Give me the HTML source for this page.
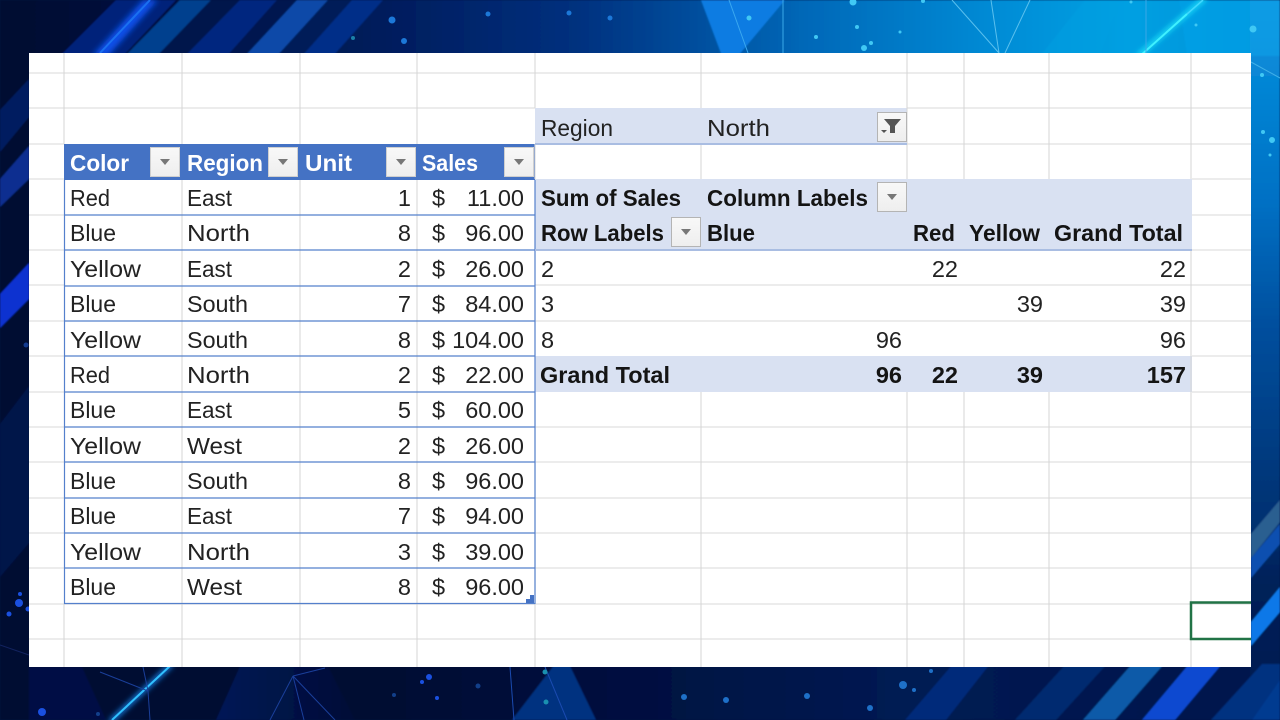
<!DOCTYPE html>
<html><head><meta charset="utf-8"><style>
html,body{margin:0;padding:0;background:#001040;width:1280px;height:720px;overflow:hidden}
svg{display:block}
text{font-family:"Liberation Sans",sans-serif;font-size:23.5px;fill:#222}
.b{font-weight:bold;fill:#141414}
.w{font-weight:bold;fill:#fff}
.g{stroke:#d8d8d8;stroke-width:1.1;fill:none}
.t{stroke:#5480cc;stroke-width:1.2;fill:none}
</style></head><body>
<svg width="1280" height="720" viewBox="0 0 1280 720" xmlns="http://www.w3.org/2000/svg">
<defs>
<linearGradient id="top" x1="0" x2="1" y1="0" y2="0"><stop offset="0" stop-color="#000a30"/><stop offset=".12" stop-color="#000f3e"/><stop offset=".3" stop-color="#001c5c"/><stop offset=".45" stop-color="#00307e"/><stop offset=".55" stop-color="#00509f"/><stop offset=".63" stop-color="#0068b8"/><stop offset=".78" stop-color="#008cd6"/><stop offset=".88" stop-color="#00a0e2"/><stop offset="1" stop-color="#008fd8"/></linearGradient>
<linearGradient id="bot" x1="0" x2="1" y1="0" y2="0"><stop offset="0" stop-color="#000a30"/><stop offset=".3" stop-color="#000a32"/><stop offset=".5" stop-color="#001040"/><stop offset=".7" stop-color="#001a52"/><stop offset="1" stop-color="#00174c"/></linearGradient>
<linearGradient id="rt" x1="0" x2="0" y1="0" y2="1"><stop offset="0" stop-color="#0a94e0"/><stop offset=".28" stop-color="#0070c4"/><stop offset=".45" stop-color="#004f9e"/><stop offset=".65" stop-color="#00387c"/><stop offset=".73" stop-color="#003070"/><stop offset=".8" stop-color="#00215a"/><stop offset="1" stop-color="#00174d"/></linearGradient>
<linearGradient id="btn" x1="0" x2="0" y1="0" y2="1"><stop offset="0" stop-color="#f8f8f8"/><stop offset="1" stop-color="#eeeeee"/></linearGradient>
<linearGradient id="tri2" x1="0" x2="1" y1="0" y2="0"><stop offset="0" stop-color="#001a5a" stop-opacity=".9"/><stop offset="1" stop-color="#001a5a" stop-opacity=".1"/></linearGradient>
<filter id="soft" x="-5%" y="-5%" width="110%" height="110%"><feGaussianBlur stdDeviation=".8"/></filter>
<filter id="glow" x="-50%" y="-50%" width="200%" height="200%"><feGaussianBlur stdDeviation="3"/></filter>
</defs>

<g filter="url(#soft)">
<rect width="1280" height="720" fill="#000a32"/>
<rect width="1280" height="56" fill="url(#top)"/>
<rect y="664" width="1280" height="56" fill="url(#bot)"/>
<rect x="1250" y="0" width="30" height="720" fill="url(#rt)"/>

<!-- top-left stripes -->
<polygon points="60,56 116,0 176,0 123,56" fill="#00217a"/>
<polygon points="125,56 180,0 211,0 157,56" fill="#00408e"/>
<polygon points="157,56 211,0 240,0 185,56" fill="#00144c"/>
<polygon points="185,56 240,0 277,0 227,56" fill="#00287f"/>
<polygon points="227,56 277,0 297,0 245,56" fill="#00164f"/>
<polygon points="245,56 297,0 328,0 277,56" fill="#0a48a8"/>
<polygon points="277,56 328,0 352,0 302,56" fill="#001a58"/>
<polygon points="302,56 352,0 383,0 333,56" fill="#002e88"/>

<!-- left strip -->
<polygon points="0,110 29,79 29,117 0,152" fill="#001f60"/>
<polygon points="0,179 29,146 29,179 0,207" fill="#0a2f90"/>
<polygon points="0,294 29,263 29,299 0,328" fill="#0a30d0"/>
<polygon points="0,424 29,386 29,543 0,577" fill="#00134a"/>

<!-- top-right shapes -->
<polygon points="701,0 785,0 738,56 722,56" fill="#0a7ce2"/>
<polygon points="1179,0 1280,0 1280,56 1187,56" fill="#0aa2e8" opacity=".6"/>
<polygon points="1040,56 1085,0 1120,0 1100,56" fill="#08a0e2" opacity=".5"/>

<!-- right strip stripes -->
<polygon points="1251,534 1280,500 1280,522 1251,558" fill="#2a5f90"/>
<polygon points="1251,558 1280,524 1280,544 1251,578" fill="#0a50b0"/>
<polygon points="1251,622 1280,587 1280,612 1251,646" fill="#0a78e8"/>
<polygon points="1251,700 1280,665 1280,720 1251,720" fill="#003a90"/>

<!-- bottom shapes -->
<polygon points="82,667 106,720 29,720 29,667" fill="#00144e" opacity=".7"/>
<polygon points="241,664 327,664 355,720 216,720" fill="url(#tri2)"/>
<polygon points="555,664 569,664 596,720 512,720" fill="#003080"/>
<polygon points="905,720 953,664 990,664 946,720" fill="#00297a"/>
<polygon points="1015,720 1066,664 1107,664 1056,720" fill="#002a70"/>
<polygon points="1083,720 1132,664 1164,664 1115,720" fill="#0a5aa8"/>
<polygon points="1142,720 1189,664 1222,664 1175,720" fill="#0a48d0"/>
<polygon points="1211,720 1262,664 1280,664 1280,680 1252,720" fill="#003080"/>
</g>

<!-- glows -->
<polygon points="92,56 143,0 158,0 108,56" fill="#0a50e8" filter="url(#glow)"/>
<line x1="100" y1="53" x2="150" y2="0" stroke="#1a70f0" stroke-width="2"/>
<line x1="1138" y1="56" x2="1205" y2="-2" stroke="#20f0ff" stroke-width="3.5" filter="url(#glow)"/>
<line x1="1140" y1="56" x2="1187" y2="14" stroke="#40f0ff" stroke-width="2"/>
<line x1="1187" y1="14" x2="1203" y2="0" stroke="#40d8ff" stroke-width="1.5"/>
<line x1="110" y1="722" x2="172" y2="664" stroke="#1a90ff" stroke-width="4" filter="url(#glow)"/>
<line x1="112" y1="720" x2="170" y2="666" stroke="#30c0ff" stroke-width="2"/>

<!-- thin lines -->
<g stroke-width="1" fill="none">
<path d="M952 0L999 53M991 0L999 53M1030 0L1005 53" stroke="#5ac0ee"/>
<path d="M783 0V53M1146 0V53" stroke="#3aa8e8"/>
<path d="M729 0L748 53" stroke="#3aa8f0"/>
<path d="M293 676L270 720M293 676L304 720M293 676L335 720M293 676L325 668" stroke="#1a3f9a"/>
<path d="M143 667L148 691L150 720M100 672L148 691" stroke="#1a3f9a"/>
<path d="M510 667L514 720M545 667L567 720" stroke="#1a4ab0"/>
<path d="M1251 62L1280 78" stroke="#40b0e8"/>
<path d="M0 645L29 655" stroke="#12235f"/>
</g>

<!-- dots -->
<g fill="#1c78d8">
<circle cx="392" cy="20" r="3.5"/><circle cx="404" cy="41" r="3"/><circle cx="488" cy="14" r="2.5"/><circle cx="569" cy="13" r="2.5"/><circle cx="610" cy="18" r="2.5"/>
</g>
<circle cx="353" cy="38" r="2" fill="#1a80a8"/>
<g fill="#40c8f4">
<circle cx="749" cy="18" r="2.5"/><circle cx="853" cy="2" r="3.5"/><circle cx="857" cy="27" r="2"/><circle cx="816" cy="37" r="2"/><circle cx="900" cy="32" r="1.5"/><circle cx="871" cy="43" r="2"/><circle cx="864" cy="48" r="3"/><circle cx="1253" cy="29" r="3.5"/><circle cx="1196" cy="25" r="1.5"/><circle cx="1131" cy="2" r="1.5"/><circle cx="923" cy="1" r="2"/><circle cx="1262" cy="75" r="2"/><circle cx="1263" cy="132" r="2"/><circle cx="1272" cy="140" r="3"/><circle cx="1270" cy="155" r="1.5"/>
</g>
<g fill="#1a50e0">
<circle cx="19" cy="603" r="4"/><circle cx="9" cy="614" r="2.5"/><circle cx="28" cy="609" r="2.5"/><circle cx="20" cy="594" r="2"/><circle cx="42" cy="712" r="4"/><circle cx="429" cy="677" r="3"/><circle cx="422" cy="682" r="2"/><circle cx="437" cy="698" r="2"/>
</g>
<circle cx="26" cy="345" r="2.500" fill="#123a90"/>
<g fill="#123f8a"><circle cx="478" cy="686" r="2.500"/><circle cx="394" cy="695" r="2"/><circle cx="98" cy="714" r="2"/></g>
<g fill="#1a90b0"><circle cx="546" cy="702" r="2.500"/><circle cx="545" cy="672" r="2.500"/></g>
<g fill="#1e70c8">
<circle cx="684" cy="697" r="3"/><circle cx="726" cy="700" r="3"/><circle cx="807" cy="696" r="3"/><circle cx="903" cy="685" r="4"/><circle cx="914" cy="690" r="2"/><circle cx="870" cy="708" r="3"/><circle cx="931" cy="671" r="2"/>
</g>

<!-- sheet -->
<rect x="29" y="53" width="1222" height="614" fill="#fff"/>

<!-- fills -->
<rect x="535" y="108" width="372" height="36" fill="#d9e1f2"/>
<rect x="535" y="179" width="657" height="71" fill="#d9e1f2"/>
<rect x="535" y="356" width="657" height="36" fill="#d9e1f2"/>
<rect x="64" y="144" width="471" height="36" fill="#4472c4"/>

<!-- grid -->
<g class="g">
<path d="M29 73H1251M29 108H535M907 108H1251M29 144H64M535 144H1251M29 179H64M1192 179H1251M29 215H64M1192 215H1251M29 250H64M1192 250H1251M29 285H64M535 285H1251M29 321H64M535 321H1251M29 356H64M1192 356H1251M29 392H64M1192 392H1251M29 427H64M535 427H1251M29 462H64M535 462H1251M29 498H64M535 498H1251M29 533H64M535 533H1251M29 568H64M535 568H1251M29 604H1251M29 639H1251"/>
<path d="M64 53V144M182 53V144M300 53V144M417 53V144M535 53V108M701 53V108M907 53V179M964 53V179M1049 53V179M1191 53V179"/>
<path d="M701 144V179M64 604V667M182 604V667M300 604V667M417 604V667M535 144V179M535 604V667"/>
<path d="M1191 250V667M701 392V667M907 392V667M964 392V667M1049 392V667M535 392V604M907 604V667"/>
<path d="M182 180V604M300 180V604M417 180V604"/>
</g>

<!-- table lines -->
<path class="t" d="M64 215H535M64 250H535M64 286H535M64 321H535M64 356H535M64 392H535M64 427H535M64 462H535M64 498H535M64 533H535M64 568H535M64 603.500H535M64.500 180V604M535 180V604"/>
<rect x="526" y="595" width="8" height="8" fill="#4472c4"/>
<rect x="526" y="595" width="4" height="4" fill="#fff"/>
<line x1="535" y1="144" x2="907" y2="144" stroke="#a9bde2" stroke-width="2"/>
<line x1="535" y1="250" x2="1192" y2="250" stroke="#a9bde2" stroke-width="2"/>

<!-- selection -->
<path d="M1251 602.500H1191V639H1251" fill="none" stroke="#217346" stroke-width="2.500"/>

<!-- buttons -->
<g fill="url(#btn)" stroke="#cfcfcf">
<rect x="150.500" y="147.500" width="29" height="29"/><rect x="268.500" y="147.500" width="29" height="29"/><rect x="386.500" y="147.500" width="29" height="29"/><rect x="504.500" y="147.500" width="29" height="29"/>
<rect x="877.500" y="112.500" width="29" height="29" stroke="#b4b4b4"/><rect x="877.500" y="182.500" width="29" height="29" stroke="#b4b4b4"/><rect x="671.500" y="217.500" width="29" height="29" stroke="#b4b4b4"/>
</g>
<g fill="#777">
<path d="M160 159h10l-5 6z"/><path d="M278 159h10l-5 6z"/><path d="M396 159h10l-5 6z"/><path d="M514 159h10l-5 6z"/>
<path d="M887 194h10l-5 6z"/><path d="M681 229h10l-5 6z"/>
<path d="M884 119h17l-6 7v7h-5v-7z" fill="#555"/><path d="M881 130h6l-3 3z" fill="#555"/>
</g>

<g>
<!-- table header -->
<text class="w" x="70" y="171" textLength="59" lengthAdjust="spacingAndGlyphs">Color</text>
<text class="w" x="187" y="171" textLength="76" lengthAdjust="spacingAndGlyphs">Region</text>
<text class="w" x="305" y="171" textLength="47" lengthAdjust="spacingAndGlyphs">Unit</text>
<text class="w" x="422" y="171" textLength="56" lengthAdjust="spacingAndGlyphs">Sales</text>

<!-- rows -->
<g>
<text x="70" y="206" textLength="40" lengthAdjust="spacingAndGlyphs">Red</text><text x="187" y="206" textLength="45" lengthAdjust="spacingAndGlyphs">East</text><text x="411" y="206" text-anchor="end">1</text><text x="432" y="206">$</text><text x="524" y="206" text-anchor="end">11.00</text>
<text x="70" y="241" textLength="46" lengthAdjust="spacingAndGlyphs">Blue</text><text x="187" y="241" textLength="63" lengthAdjust="spacingAndGlyphs">North</text><text x="411" y="241" text-anchor="end">8</text><text x="432" y="241">$</text><text x="524" y="241" text-anchor="end">96.00</text>
<text x="70" y="277" textLength="71" lengthAdjust="spacingAndGlyphs">Yellow</text><text x="187" y="277" textLength="45" lengthAdjust="spacingAndGlyphs">East</text><text x="411" y="277" text-anchor="end">2</text><text x="432" y="277">$</text><text x="524" y="277" text-anchor="end">26.00</text>
<text x="70" y="312" textLength="46" lengthAdjust="spacingAndGlyphs">Blue</text><text x="187" y="312" textLength="61" lengthAdjust="spacingAndGlyphs">South</text><text x="411" y="312" text-anchor="end">7</text><text x="432" y="312">$</text><text x="524" y="312" text-anchor="end">84.00</text>
<text x="70" y="348" textLength="71" lengthAdjust="spacingAndGlyphs">Yellow</text><text x="187" y="348" textLength="61" lengthAdjust="spacingAndGlyphs">South</text><text x="411" y="348" text-anchor="end">8</text><text x="432" y="348">$</text><text x="524" y="348" text-anchor="end">104.00</text>
<text x="70" y="383" textLength="40" lengthAdjust="spacingAndGlyphs">Red</text><text x="187" y="383" textLength="63" lengthAdjust="spacingAndGlyphs">North</text><text x="411" y="383" text-anchor="end">2</text><text x="432" y="383">$</text><text x="524" y="383" text-anchor="end">22.00</text>
<text x="70" y="418" textLength="46" lengthAdjust="spacingAndGlyphs">Blue</text><text x="187" y="418" textLength="45" lengthAdjust="spacingAndGlyphs">East</text><text x="411" y="418" text-anchor="end">5</text><text x="432" y="418">$</text><text x="524" y="418" text-anchor="end">60.00</text>
<text x="70" y="454" textLength="71" lengthAdjust="spacingAndGlyphs">Yellow</text><text x="187" y="454" textLength="55" lengthAdjust="spacingAndGlyphs">West</text><text x="411" y="454" text-anchor="end">2</text><text x="432" y="454">$</text><text x="524" y="454" text-anchor="end">26.00</text>
<text x="70" y="489" textLength="46" lengthAdjust="spacingAndGlyphs">Blue</text><text x="187" y="489" textLength="61" lengthAdjust="spacingAndGlyphs">South</text><text x="411" y="489" text-anchor="end">8</text><text x="432" y="489">$</text><text x="524" y="489" text-anchor="end">96.00</text>
<text x="70" y="524" textLength="46" lengthAdjust="spacingAndGlyphs">Blue</text><text x="187" y="524" textLength="45" lengthAdjust="spacingAndGlyphs">East</text><text x="411" y="524" text-anchor="end">7</text><text x="432" y="524">$</text><text x="524" y="524" text-anchor="end">94.00</text>
<text x="70" y="560" textLength="71" lengthAdjust="spacingAndGlyphs">Yellow</text><text x="187" y="560" textLength="63" lengthAdjust="spacingAndGlyphs">North</text><text x="411" y="560" text-anchor="end">3</text><text x="432" y="560">$</text><text x="524" y="560" text-anchor="end">39.00</text>
<text x="70" y="595" textLength="46" lengthAdjust="spacingAndGlyphs">Blue</text><text x="187" y="595" textLength="55" lengthAdjust="spacingAndGlyphs">West</text><text x="411" y="595" text-anchor="end">8</text><text x="432" y="595">$</text><text x="524" y="595" text-anchor="end">96.00</text>
</g>

<!-- pivot -->
<text x="541" y="136" textLength="72" lengthAdjust="spacingAndGlyphs">Region</text>
<text x="707" y="136" textLength="63" lengthAdjust="spacingAndGlyphs">North</text>
<text class="b" x="541" y="206" textLength="140" lengthAdjust="spacingAndGlyphs">Sum of Sales</text>
<text class="b" x="707" y="206" textLength="161" lengthAdjust="spacingAndGlyphs">Column Labels</text>
<text class="b" x="541" y="241" textLength="123" lengthAdjust="spacingAndGlyphs">Row Labels</text>
<text class="b" x="707" y="241" textLength="48" lengthAdjust="spacingAndGlyphs">Blue</text>
<text class="b" x="913" y="241" textLength="42" lengthAdjust="spacingAndGlyphs">Red</text>
<text class="b" x="969" y="241" textLength="71" lengthAdjust="spacingAndGlyphs">Yellow</text>
<text class="b" x="1054" y="241" textLength="129" lengthAdjust="spacingAndGlyphs">Grand Total</text>

<text x="541" y="277">2</text><text x="958" y="277" text-anchor="end">22</text><text x="1186" y="277" text-anchor="end">22</text>
<text x="541" y="312">3</text><text x="1043" y="312" text-anchor="end">39</text><text x="1186" y="312" text-anchor="end">39</text>
<text x="541" y="348">8</text><text x="902" y="348" text-anchor="end">96</text><text x="1186" y="348" text-anchor="end">96</text>
<text class="b" x="540" y="383" textLength="130" lengthAdjust="spacingAndGlyphs">Grand Total</text>
<text class="b" x="902" y="383" text-anchor="end">96</text><text class="b" x="958" y="383" text-anchor="end">22</text><text class="b" x="1043" y="383" text-anchor="end">39</text><text class="b" x="1186" y="383" text-anchor="end">157</text>
</g>
</svg>
</body></html>
